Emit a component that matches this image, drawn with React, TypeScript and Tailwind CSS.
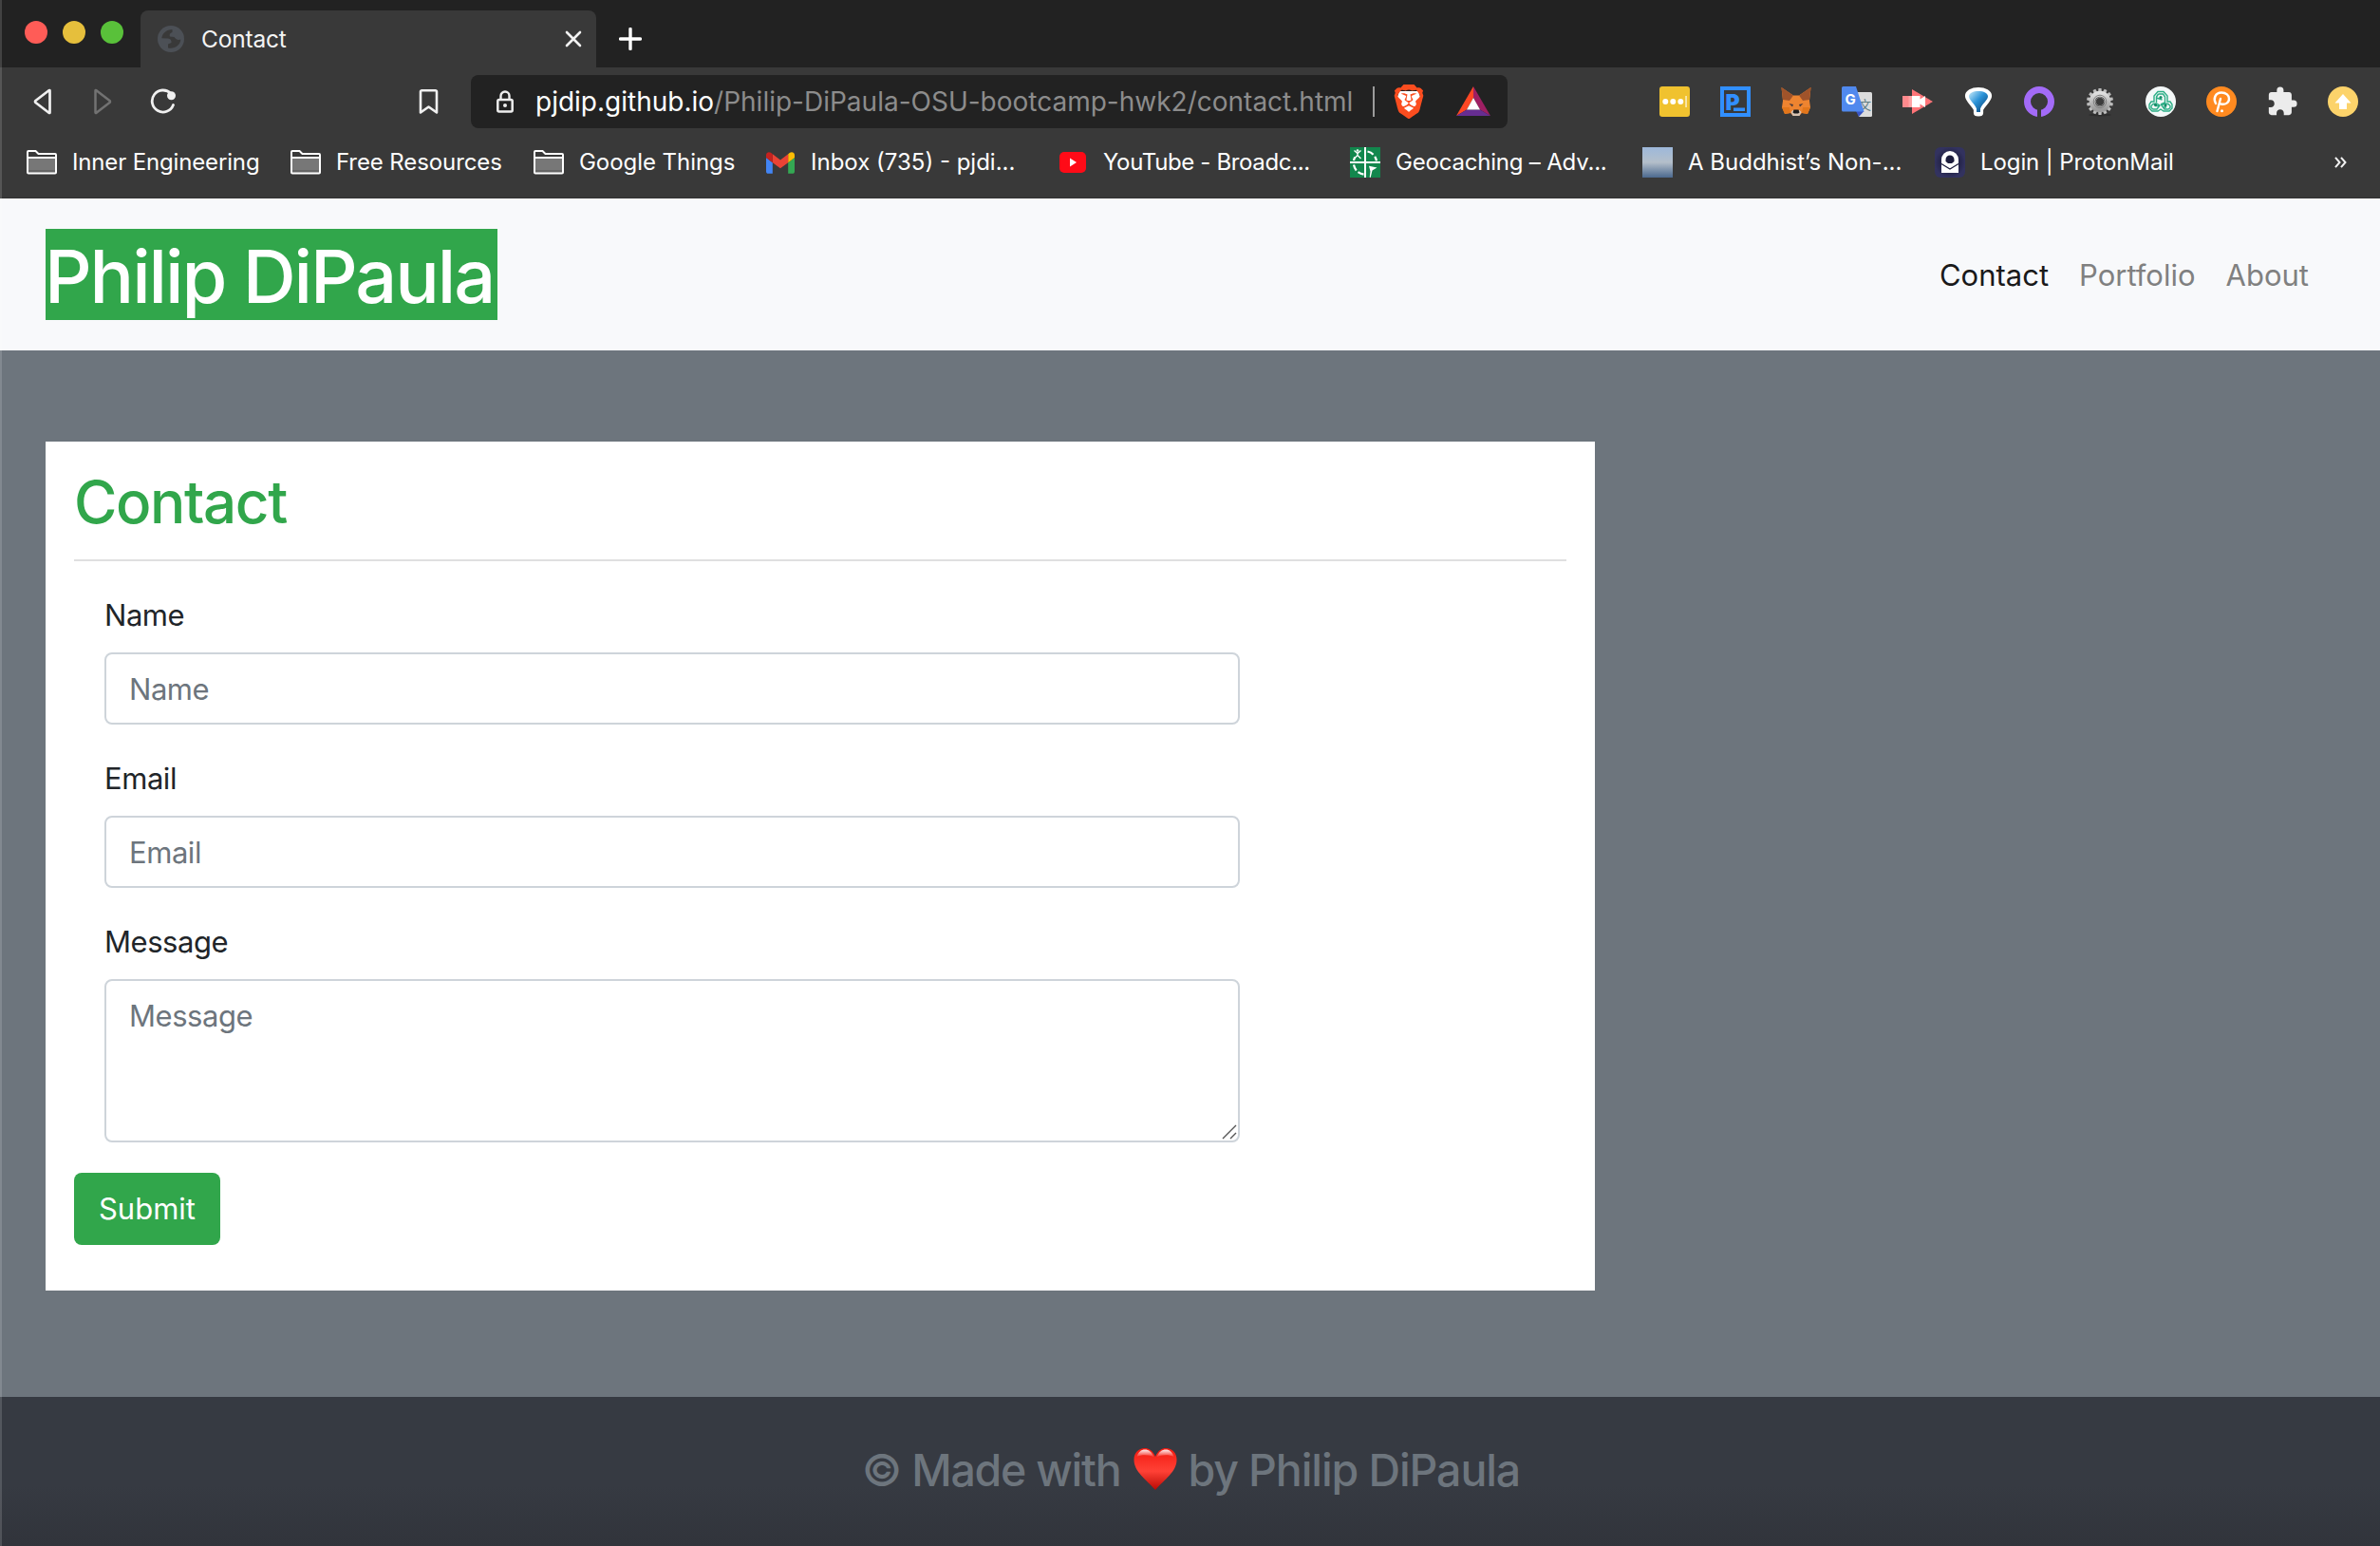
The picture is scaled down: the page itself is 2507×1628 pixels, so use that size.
import type { ReactNode } from "react";
import { MdExtension } from "react-icons/md";
import { SiBrave } from "react-icons/si";

const sans = "font-['Inter','Liberation_Sans',sans-serif]";

function Globe() {
  return (
    <svg className="h-7 w-7" viewBox="0 0 28 28">
      <circle cx="14" cy="14" r="14" fill="#4c5056" />
      <path
        fill="#393939"
        d="M15.5 4C9.500 4 5 8 4.300 13.300L11 13.500C13.500 13.800 14.800 15.300 14.500 18L11 19.500V23.500C18 25 24 20.500 24.300 14.500C22 15.500 19.500 15 17.500 12L13 11.500C12 9.500 13.500 7.500 15.500 7Z"
      />
    </svg>
  );
}

function Folder() {
  return (
    <svg className="h-[26px] w-8" viewBox="0 0 32 26">
      <path d="M2 8h28v14H2z" fill="#777" />
      <path d="M2 21h28v3H2z" fill="#666" />
      <path
        d="M1 23.500V2a1 1 0 0 1 1-1h7.500l3 3H30a1 1 0 0 1 1 1v18.500a1 1 0 0 1-1 1H2a1 1 0 0 1-1-1zM1 8h30"
        fill="none"
        stroke="#fff"
        strokeWidth="2"
      />
    </svg>
  );
}

function Gmail() {
  return (
    <svg className="h-[23px] w-[30px]" viewBox="52 42 88 66">
      <path fill="#4285f4" d="M58 108h14V74L52 59v43c0 3.320 2.690 6 6 6" />
      <path fill="#34a853" d="M120 108h14c3.320 0 6-2.690 6-6V59l-20 15" />
      <path fill="#fbbc04" d="M120 48v26l20-15v-8c0-7.420-8.470-11.650-14.400-7.200" />
      <path fill="#ea4335" d="M72 74V48l24 18 24-18v26L96 92" />
      <path fill="#c5221f" d="M52 51v8l20 15V48l-5.600-4.200c-5.940-4.450-14.400-.22-14.400 7.200" />
    </svg>
  );
}

function YouTube() {
  return (
    <svg className="h-[22px] w-[30px]" viewBox="0 0 30 22">
      <rect x="1" width="28" height="22" rx="5" fill="#ff0b17" />
      <path d="M12 6.500v9l7-4.500z" fill="#fff" />
    </svg>
  );
}

function Geocaching() {
  return (
    <svg className="h-8 w-8" viewBox="0 0 32 32">
      <path d="M0 0h32v32H0z" fill="#12874d" />
      <g fill="none" stroke="#fff">
        <path d="M16 0v32M0 16h32" strokeWidth="2" />
        <path
          d="M18.500 4.500c2.500.5 4.500 1.500 6 3.200M26.200 9.800c1 1.500 1.500 3 1.700 4.500M4 14c.2-1.500.7-2.500 1.200-3.500M4 18.500c.5 2.500 1.500 4.500 2.700 6M8.500 26.200c2 1.500 3.700 2.200 6 2.500"
          strokeWidth="2.200"
        />
        <path d="M4.500 3.500L8 6.500l3.500-3M8 6v3M4.500 12L8 8.500l3.500 3.500" strokeWidth="1.400" />
      </g>
      <circle cx="8" cy="3.500" r="1.300" fill="#fff" />
      <path d="M20 19.800l8.500 1.700-5 3-1.800 7.500-1-.5.800-6z" fill="#fff" />
    </svg>
  );
}

function Proton() {
  return (
    <svg className="h-8 w-8" viewBox="0 0 32 32">
      <defs>
        <radialGradient id="proton">
          <stop offset="0.4" stopColor="#1c1c3c" />
          <stop offset="1" stopColor="#32325f" />
        </radialGradient>
      </defs>
      <rect width="32" height="32" rx="6" fill="url(#proton)" />
      <path d="M7 27V13a9 9 0 0 1 18 0v14z" fill="#fff" />
      <path d="M11.500 15v-2a4.500 4.500 0 0 1 9 0v2l-2.500 2h-4z" fill="#1c1c3c" />
      <path d="M7 17.500l9 5.500 9-5.500" fill="none" stroke="#1c1c3c" strokeWidth="1.300" />
    </svg>
  );
}

function Clouds() {
  return (
    <span className="block h-8 w-8 bg-linear-to-b from-[#9db8da] via-[#b4bfca] to-[#4c698e]" />
  );
}

function Brave() {
  return (
    <span className="relative block h-9 w-8">
      <svg className="absolute inset-0 h-9 w-8" viewBox="0 0 32 36">
        <path d="M6 7h20l2 6-4 14-8 6-8-6L4 13z" fill="#fff" />
      </svg>
      <SiBrave className="absolute -left-0.5 top-0 h-9 w-9 text-[#fb4d1f]" />
    </span>
  );
}

function Bat() {
  return (
    <svg className="h-8 w-9" viewBox="0 0 36 32">
      <path d="M18 0v12l-7 12.500L0 31z" fill="#ff4724" />
      <path d="M18 0v12l7 12.500L36 31z" fill="#9e1f63" />
      <path d="M0 31l11-6.500h14L36 31z" fill="#662d91" />
      <path d="M18 12l7 12.500H11z" fill="#fff" />
    </svg>
  );
}

function Ext({ children }: { children: ReactNode }) {
  return (
    <svg className="h-8 w-8 shrink-0 overflow-visible" viewBox="0 0 32 32">
      {children}
    </svg>
  );
}

function Extensions() {
  const teeth = Array.from({ length: 14 }, (_, i) => (i * 360) / 14);
  return (
    <div className="flex items-center gap-8">
      <Ext>
        <rect width="32" height="32" rx="3" fill="#f0c22f" />
        <g fill="#fff">
          <circle cx="6.300" cy="16" r="3" />
          <circle cx="14.300" cy="16" r="3" />
          <circle cx="22.300" cy="16" r="3" />
          <path d="M27.300 10h1.500v12h-1.500z" opacity=".75" />
        </g>
      </Ext>
      <Ext>
        <path d="M0 0h32v32H0z" fill="#318fff" />
        <path d="M4 4h24v24H4z" fill="#393939" />
        <text x="5.500" y="24.500" fontFamily="Inter" fontSize="23" fontWeight="900" fill="#318fff">P</text>
        <path d="M14 22.500h12v3.500H14z" fill="#318fff" />
      </Ext>
      <Ext>
        <path d="M0.500 1l12.500 8.500h6L31.500 1 30 15l1 7-3 7-6-1-3 3h-6l-3-3-6 1-3-7 1-7z" fill="#ee8430" />
        <path d="M.5 1L13 9.500 9 15l-7-1zM31.500 1L19 9.500l4 5.500 7-1z" fill="#a0532a" />
        <path d="M1 22h8l1 6-6 1zM31 22h-8l-1 6 6 1z" fill="#e2761b" />
        <path d="M8.500 18l4.500 1-1 2.500zM23.500 18L19 19l1 2.500z" fill="#4a3a3a" />
        <path d="M10.500 27l2-2h7l2 2-2 4h-7z" fill="#d8c4b2" />
        <path d="M13.500 24.500h5l1 3-1.500 1h-4l-1.500-1z" fill="#1d1d1d" />
      </Ext>
      <Ext>
        <path d="M14 6h16.500a1.500 1.500 0 0 1 1.500 1.500v23a1.500 1.500 0 0 1-1.500 1.500H18z" fill="#dcdcdc" />
        <text x="18" y="24" fontFamily="Noto Sans CJK SC" fontSize="13" fontWeight="400" fill="#5f7d84">文</text>
        <path d="M15 26h8.500L18 32z" fill="#3a55c4" />
        <path d="M1.500 0H15l8.500 26.500h-22A1.500 1.500 0 0 1 0 25V1.500A1.500 1.500 0 0 1 1.500 0z" fill="#5089ee" />
        <text x="3.500" y="18.500" fontFamily="Inter" fontSize="15" fontWeight="700" fill="#fff">G</text>
      </Ext>
      <Ext>
        <path d="M0 10h10v12H0z" fill="#ff8a8d" />
        <path d="M10 3l22 13-22 13z" fill="#ff7478" />
        <path d="M10 10h8.500v3.500l5.500-3.500v12l-5.500-3.500V22H10z" fill="#fff" />
        <path d="M6.500 10H10v12H6.500z" fill="#ffa3a5" />
      </Ext>
      <Ext>
        <defs>
          <linearGradient id="drop" x1="0" y1="0" x2="1" y2="1">
            <stop offset="0" stopColor="#c9ecfb" />
            <stop offset=".45" stopColor="#2c93d8" />
            <stop offset="1" stopColor="#053a6b" />
          </linearGradient>
        </defs>
        <path
          d="M16 2C9 2 3 5 3 10c0 5 7 10 9 14.500V28c0 1.500 1.500 2.500 4 2.500s4-1 4-2.500v-3.500C22 20 29 15 29 10c0-5-6-8-13-8z"
          fill="#fff"
          stroke="#fff"
          strokeWidth="2.200"
        />
        <path d="M16 5C10.500 5 6 7 6 10.500c0 3.500 6.500 8.500 8 13V27h4v-3.500c1.500-4.500 8-9.500 8-13C26 7 21.500 5 16 5z" fill="url(#drop)" />
      </Ext>
      <Ext>
        <circle cx="16" cy="16" r="12.500" fill="none" stroke="#a36bf8" strokeWidth="7" />
        <path d="M14 23h4v10h-4z" fill="#393939" />
      </Ext>
      <Ext>
        <defs>
          <linearGradient id="steel" x1="0" y1="0" x2="0" y2="1">
            <stop offset="0" stopColor="#dedede" />
            <stop offset="1" stopColor="#9a9a9a" />
          </linearGradient>
        </defs>
        <ellipse cx="16" cy="30" rx="12" ry="1.500" fill="#2e2e2e" />
        {teeth.map((a) => (
          <path key={a} d="M14.500 2h3l.5 5h-4z" fill="#bdbdbd" transform={`rotate(${a} 16 16)`} />
        ))}
        <circle cx="16" cy="16" r="8.300" fill="none" stroke="url(#steel)" strokeWidth="6" />
        <circle cx="16" cy="16" r="6.800" fill="none" stroke="#808080" strokeWidth="1" />
        <circle cx="16" cy="16" r="4.500" fill="#3c3c3c" stroke="#8b8b8b" strokeWidth="1" />
      </Ext>
      <Ext>
        <circle cx="16" cy="16" r="16" fill="#f4f8f8" />
        <g fill="none" stroke="#2cae86" strokeWidth="1.400">
          <path d="M13 5.500h6l4 4.500v6h3l2 3v4l-3 3h-6l-3-2-3 2H7l-3-3v-4l2-3h3v-6z" />
          <path d="M13.500 8h5l2 3v6l-4.500 2M11.500 17v-6l2-3M11.500 12l6 2M8 18.500l-2 2v2l2 1.500h4l3-4-3.500-2zM24 18.500l2 2v2L24 24h-4l-3-4 3.500-2zM10 20.500h4M18 22h4" />
        </g>
        <g fill="#178a68">
          <circle cx="16" cy="11.500" r="1.600" />
          <circle cx="10.500" cy="19.500" r="1.600" />
          <circle cx="21" cy="20" r="1.600" />
        </g>
      </Ext>
      <Ext>
        <circle cx="16" cy="16" r="16" fill="#ff8a20" />
        <path
          d="M10 18c-3-5-.5-11.500 6-11.500 5 0 8 3 8 6.500 0 4-3.500 6.500-8.500 5.500M15 13l-3.500 13"
          fill="none"
          stroke="#fff"
          strokeWidth="2.400"
          strokeLinecap="round"
        />
        <circle cx="16.500" cy="25.800" r="1.500" fill="#fff" />
      </Ext>
      <span className="flex h-8 w-8 items-center justify-center">
        <MdExtension className="h-[34px] w-[34px] shrink-0 text-[#ececec]" />
      </span>
      <Ext>
        <circle cx="16" cy="16" r="16" fill="#fcd36b" />
        <path d="M16 8l8.500 9.500H20V24h-8v-6.500H7.500z" fill="#fff" />
      </Ext>
    </div>
  );
}

function TabStrip() {
  return (
    <div className="flex h-[71px] items-end bg-[#222]">
      <div className="mb-[25px] ml-[26px] flex gap-4">
        <span className="h-6 w-6 rounded-full bg-[#ff5c57]" />
        <span className="h-6 w-6 rounded-full bg-[#e6bf3c]" />
        <span className="h-6 w-6 rounded-full bg-[#59c13a]" />
      </div>
      <div className="ml-[18px] flex h-[60px] w-[480px] items-center rounded-t-lg bg-[#393939] pl-[18px] pr-[15px]">
        <Globe />
        <span className="ml-[18px] flex-1 text-[24.5px] leading-none tracking-[-0.2px] text-[#f4f4f4]">Contact</span>
        <svg className="h-[18px] w-[18px]" viewBox="0 0 18 18">
          <path d="M2 2l14 14M16 2L2 16" stroke="#f2f2f2" strokeWidth="2.600" strokeLinecap="round" />
        </svg>
      </div>
      <svg className="mb-[18px] ml-6 h-6 w-6" viewBox="0 0 24 24">
        <path d="M12 1.500v21M1.500 12h21" stroke="#fff" strokeWidth="3.400" strokeLinecap="round" />
      </svg>
    </div>
  );
}

function Toolbar() {
  return (
    <div className="flex h-[72px] items-center bg-[#393939] pl-[34px]">
      <svg className="h-7 w-[21px]" viewBox="0 0 21 28">
        <path d="M18.500 2.500v23q0 .8-1 .3L3.500 15q-1-1 0-2L17.500 2.200q1-.5 1 .3z" fill="none" stroke="#f0f0f0" strokeWidth="2.700" strokeLinejoin="round" />
      </svg>
      <svg className="ml-[43px] h-7 w-[21px]" viewBox="0 0 21 28">
        <path d="M2.500 2.500v23q0 .8 1 .3L17.500 15q1-1 0-2L3.500 2.200q-1-.5-1 .3z" fill="none" stroke="#727272" strokeWidth="2.500" strokeLinejoin="round" />
      </svg>
      <svg className="ml-[39px] h-7 w-7" viewBox="0 0 28 28">
        <path d="M22 5.500A11.500 11.500 0 1 0 24.500 17.500" fill="none" stroke="#f0f0f0" strokeWidth="2.800" strokeLinecap="round" />
        <circle cx="22.500" cy="7.800" r="4.500" fill="#f0f0f0" />
      </svg>
      <svg className="ml-[255px] h-7 w-[21px]" viewBox="0 0 21 28">
        <path d="M2 3.500A1.300 1.300 0 0 1 3.300 2.200h14.400A1.300 1.300 0 0 1 19 3.500V25.500L10.500 19.500 2 25.500z" fill="none" stroke="#f0f0f0" strokeWidth="2.600" strokeLinejoin="round" />
      </svg>
      <div className="ml-[34px] flex h-14 w-[1092px] items-center rounded-lg bg-[#222] pl-[27px]">
        <svg className="h-6 w-[18px]" viewBox="0 0 18 24">
          <path d="M4.500 10V6a4.500 4.500 0 0 1 9 0v4" fill="none" stroke="#ededed" strokeWidth="2.400" />
          <rect x="1.300" y="10" width="15.400" height="12.500" rx="1.500" fill="none" stroke="#ededed" strokeWidth="2.500" />
          <circle cx="9" cy="16" r="2" fill="#ededed" />
        </svg>
        <span className="ml-[23px] w-[883px] whitespace-nowrap text-[28px] leading-none text-[#8c8c8c]">
          <span className="text-white">pjdip.github.io</span>/Philip-DiPaula-OSU-bootcamp-hwk2/contact.html
        </span>
        <span className="-ml-px h-8 w-0.5 bg-[#9b9b9b]" />
        <span className="ml-5">
          <Brave />
        </span>
        <span className="ml-[34px]">
          <Bat />
        </span>
      </div>
      <div className="ml-40">
        <Extensions />
      </div>
    </div>
  );
}

const bookmarks: { label: string; icon: ReactNode; slot: string; width: string; text: string }[] = [
  { label: "Inner Engineering", icon: <Folder />, slot: "w-12", width: "w-[278px]", text: "tracking-[-0.15px]" },
  { label: "Free Resources", icon: <Folder />, slot: "w-12", width: "w-[256px]", text: "tracking-[-0.1px]" },
  { label: "Google Things", icon: <Folder />, slot: "w-12", width: "w-[245px]", text: "tracking-[-0.05px]" },
  { label: "Inbox (735) - pjdi...", icon: <Gmail />, slot: "w-[47px]", width: "w-[308px]", text: "tracking-normal" },
  { label: "YouTube - Broadc...", icon: <YouTube />, slot: "w-[47px]", width: "w-[307px]", text: "tracking-[-0.35px]" },
  { label: "Geocaching – Adv...", icon: <Geocaching />, slot: "w-12", width: "w-[308px]", text: "tracking-[-0.2px]" },
  { label: "A Buddhist’s Non-...", icon: <Clouds />, slot: "w-12", width: "w-[308px]", text: "tracking-normal" },
  { label: "Login | ProtonMail", icon: <Proton />, slot: "w-12", width: "w-[308px]", text: "tracking-[-0.1px]" },
];

function Bookmarks() {
  return (
    <div className="flex h-[66px] items-center border-b border-[#333] bg-[#393939] pb-[9px] pl-7">
      {bookmarks.map((b) => (
        <div key={b.label} className={`flex shrink-0 items-center ${b.width}`}>
          <span className={`flex shrink-0 ${b.slot}`}>{b.icon}</span>
          <span className={`whitespace-nowrap text-[24px] leading-none text-white ${b.text}`}>{b.label}</span>
        </div>
      ))}
      <svg className="ml-[113px] h-3 w-[13px]" viewBox="0 0 13 12">
        <path d="M1 .8L5.500 6 1 11.200M7 .8L11.500 6 7 11.200" fill="none" stroke="#f2f2f2" strokeWidth="2" />
      </svg>
    </div>
  );
}

const field =
  "block w-[1196px] rounded-lg border-2 border-[#ced4da] bg-white px-6 text-[31px] tracking-[-0.45px] text-[#495057] placeholder:text-[#6d757d] placeholder:opacity-100";

function Field({ label }: { label: string }) {
  return (
    <div className="mb-8 ml-8">
      <label className="mb-[15px] block pt-px text-[31px] leading-[48px] tracking-[-0.45px] text-[#212529]">{label}</label>
      {label === "Message" ? (
        <div className="relative w-[1196px]">
          <textarea className={`${field} h-[172px] resize-none pb-3 pt-[13px] leading-[48px]`} placeholder={label} />
          <svg className="absolute bottom-[3px] right-[3px] h-4 w-4" viewBox="0 0 16 16">
            <path d="M1 15L15 1M9 15l6-6" stroke="#555" strokeWidth="1.400" />
          </svg>
        </div>
      ) : (
        <input className={`${field} h-[76px]`} placeholder={label} />
      )}
    </div>
  );
}

export default function App() {
  return (
    <div className={`relative flex h-[1628px] w-[2507px] flex-col overflow-hidden bg-[#6d757d] ${sans}`}>
      <TabStrip />
      <Toolbar />
      <Bookmarks />

      <header className="flex h-40 items-center justify-between bg-[#f8f9fb] pl-12 pr-[75px]">
        <h1 className="h-24 w-[476px] whitespace-nowrap bg-[#31a64b] pt-0.5 text-[77.5px] font-[545] leading-[96px] tracking-[-2.1px] text-white">
          <span className="-ml-px">Philip DiPaula</span>
        </h1>
        <nav className="flex gap-8 pt-px text-[31px] leading-[48px] tracking-normal text-[#808080]">
          <a className="text-[#1a1a1a]">Contact</a>
          <a>Portfolio</a>
          <a>About</a>
        </nav>
      </header>

      <main className="h-[1102px] pl-12 pt-24">
        <section className="h-[894px] w-[1632px] bg-white px-[30px] pt-[25px]">
          <h2 className="h-[99px] text-[62px] font-[540] leading-[77px] tracking-[-1.4px] text-[#31a64b]">
            Contact
          </h2>
          <hr className="mb-8 border-0 border-t-2 border-[#dfdfe0]" />
          <Field label="Name" />
          <Field label="Email" />
          <Field label="Message" />
          <button className="h-[76px] w-[154px] rounded-lg bg-[#31a64b] pt-px text-[31px] tracking-normal text-white">Submit</button>
        </section>
      </main>

      <footer className="flex h-[157px] justify-center bg-linear-to-b from-[#363a42] from-60% to-[#31343b] pl-0.5 pt-12 text-[46.5px] font-[545] leading-[58px] text-[#6d757d]">
        <span className="tracking-[-1.25px]">© Made with</span>
        <svg className="ml-3.5 mr-[11px] mt-[5px] h-[46px] w-[46px]" viewBox="0 0 46 46">
          <defs>
            <linearGradient id="heart" x1="0" y1="0" x2="0" y2="1">
              <stop offset="0" stopColor="#f21a10" />
              <stop offset=".55" stopColor="#ff4136" />
              <stop offset="1" stopColor="#b80a04" />
            </linearGradient>
            <linearGradient id="shine" x1="0" y1="0" x2="0" y2="1">
              <stop offset="0" stopColor="#fff" stopOpacity=".95" />
              <stop offset="1" stopColor="#fff" stopOpacity="0" />
            </linearGradient>
          </defs>
          <path d="M23 10C20 3 16 1 12 1 5 1 .5 6 .5 13c0 13 13 21 22.500 32C32.500 34 45.500 26 45.500 13 45.500 6 41 1 34 1c-4 0-8 2-11 9z" fill="url(#heart)" />
          <path d="M3.500 10C5 5 8 2.500 12 2.500c4 0 7.500 2.500 9.500 8-5-3-13-3-18-.5zM42.500 10C41 5 38 2.500 34 2.500c-4 0-7.500 2.500-9.500 8 5-3 13-3 18-.5z" fill="url(#shine)" />
        </svg>
        <span className="tracking-[-1.1px]">by Philip DiPaula</span>
      </footer>

      <div className="pointer-events-none absolute inset-y-0 left-0 w-0.5 bg-white/15" />
    </div>
  );
}
